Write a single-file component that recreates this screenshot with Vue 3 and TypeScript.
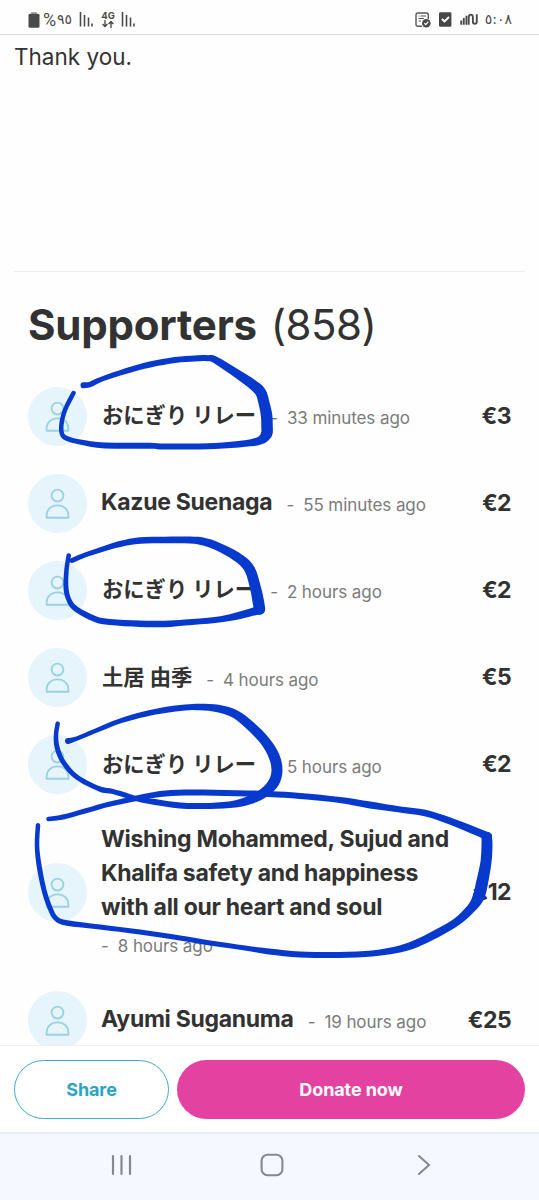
<script setup lang="ts">
interface Supporter {
  name: string
  time: string
  amount: string
  long?: boolean
  cjk?: boolean
}

const supporters: Supporter[] = [
  { name: 'おにぎり リレー', time: '33 minutes ago', amount: '€3', cjk: true },
  { name: 'Kazue Suenaga', time: '55 minutes ago', amount: '€2' },
  { name: 'おにぎり リレー', time: '2 hours ago', amount: '€2', cjk: true },
  { name: '土居 由季', time: '4 hours ago', amount: '€5', cjk: true },
  { name: 'おにぎり リレー', time: '5 hours ago', amount: '€2', cjk: true },
  {
    name: 'Wishing Mohammed, Sujud and Khalifa safety and happiness with all our heart and soul',
    time: '8 hours ago',
    amount: '€12',
    long: true,
  },
  { name: 'Ayumi Suganuma', time: '19 hours ago', amount: '€25' },
]

// Pen strokes: x, y and pen width at each point.
type Point = [number, number, number]

const strokes: Point[][] = [
  [[83.5, 385.3, 6], [90, 384.5, 5.5], [102, 379, 5], [126, 371, 5.5], [150, 364.5, 6], [175, 360, 6], [195, 358.4, 6], [208, 358.2, 6], [215.5, 360, 7], [236, 373, 8.5], [252, 384, 10], [260.5, 392, 11], [264, 403, 11], [266.5, 415, 11.5], [267, 426, 11.5], [266.5, 434, 11.5], [260, 440.5, 8.5], [245, 443.5, 6.5], [215, 446, 6], [185, 446.5, 6], [160, 446.5, 6], [150, 445.7, 6], [105, 445.5, 6], [80, 442, 5], [67, 438.5, 5], [62, 434, 4.5], [61.5, 424, 4.5], [65, 410, 4.5], [73.5, 393, 4.5]],
  [[68.7, 555.5, 4.5], [66.5, 570, 4.5], [66, 588, 5], [69, 600, 5], [76, 609, 5.5], [95, 619, 6], [110, 622, 6], [140, 623.7, 6.5], [165, 624, 6.5], [185, 622.5, 6], [215, 620, 6], [235, 616.5, 7], [252, 612, 8], [260, 610, 9]],
  [[259.5, 609, 11.5], [258, 600, 11.5], [255.5, 588, 11], [250, 570, 10.5], [240, 559, 9.5], [222, 548.5, 8.5], [205, 542, 8], [190, 540, 7], [165, 540, 6.5], [140, 540.5, 6.5], [120, 544, 6], [100, 550, 5], [85, 555, 5], [72, 560.5, 5]],
  [[57.7, 723.5, 4.5], [56, 735, 4.5], [57, 747, 5], [62, 760, 5], [72, 773, 5], [83, 781, 5], [95, 787, 5], [103, 790, 5.5], [112, 791.3, 5], [125, 795, 5], [138, 799, 5], [155, 802, 6], [180, 805.5, 6], [210, 806, 6], [235, 804, 7], [252, 799, 9], [265, 792, 10], [274, 782, 11], [277, 770, 11], [274, 756, 11], [265, 741, 10], [250, 725.5, 9.5], [235, 714, 8.5], [218, 708.5, 7.5], [200, 707, 6.5], [185, 707.5, 6], [165, 710, 6], [145, 714, 5.5], [120, 721, 5], [95, 731, 4.5], [77, 738.5, 4.5], [68, 741, 6]],
  [[48.5, 819, 4.5], [63, 817, 5], [85, 811, 5], [110, 804, 5], [138, 798, 5.5], [160, 794, 6], [185, 792.5, 6], [225, 793, 6], [269, 794, 6], [300, 796, 6], [340, 800, 6], [370, 805, 7], [400, 809.5, 6], [425, 813, 6.5], [450, 821, 7], [475, 831, 7.5], [488, 836.5, 8]],
  [[486.7, 837, 10.5], [487, 845, 11], [486, 862, 11], [482, 883, 12], [478.5, 897, 12], [471, 908.5, 9], [455, 923, 8], [430, 937, 8], [410, 946, 7.5], [390, 951, 6.5], [365, 954, 6], [330, 955, 6], [300, 954.5, 6], [269, 951.5, 6], [245, 948, 5], [210, 943, 5], [180, 938, 5], [140, 932, 5], [100, 927, 5], [67, 923, 5.5], [56, 918.5, 5], [50, 908, 5], [44, 890, 5], [39, 865, 5], [37, 845, 4.5], [38, 825, 4.5]],
]

function spline(a: number, b: number, c: number, d: number, t: number): number {
  return 0.5 * (2 * b + (c - a) * t + (2 * a - 5 * b + 4 * c - d) * t * t + (3 * b - a - 3 * c + d) * t * t * t)
}

// Closed shape of a stroke: its two offset edges with a round cap at each end.
function outline(points: Point[]): string {
  const samples: Point[] = []
  const steps = 4
  for (let i = 0; i < points.length - 1; i++) {
    const p0 = points[Math.max(i - 1, 0)]
    const p1 = points[i]
    const p2 = points[i + 1]
    const p3 = points[Math.min(i + 2, points.length - 1)]
    for (let s = 0; s < steps; s++) {
      const t = s / steps
      samples.push([
        spline(p0[0], p1[0], p2[0], p3[0], t),
        spline(p0[1], p1[1], p2[1], p3[1], t),
        p1[2] + (p2[2] - p1[2]) * t,
      ])
    }
  }
  samples.push(points[points.length - 1])

  const left: string[] = []
  const right: string[] = []
  samples.forEach(([x, y, w], i) => {
    const before = samples[Math.max(i - 1, 0)]
    const after = samples[Math.min(i + 1, samples.length - 1)]
    const dx = after[0] - before[0]
    const dy = after[1] - before[1]
    const len = Math.hypot(dx, dy) || 1
    const ox = (dy / len) * (w / 2)
    const oy = (-dx / len) * (w / 2)
    left.push(`${(x + ox).toFixed(2)} ${(y + oy).toFixed(2)}`)
    right.unshift(`${(x - ox).toFixed(2)} ${(y - oy).toFixed(2)}`)
  })
  const endR = samples[samples.length - 1][2] / 2
  const startR = samples[0][2] / 2
  return `M${left.join('L')}A${endR} ${endR} 0 0 1 ${right.join('L')}A${startR} ${startR} 0 0 1 ${left[0]}Z`
}

const ink: string[] = strokes.map(outline)
</script>

<template>
  <div class="screen">
    <header class="status">
      <div class="status-left">
        <svg class="battery" width="12" height="16" viewBox="0 0 12 16">
          <rect x="3" y="0" width="6" height="3" rx="1" fill="#aaa" />
          <rect x="0.5" y="1.8" width="11" height="14" rx="1.5" fill="#4a4a4a" />
        </svg>
        <span class="percent">%</span><span class="digits">٩٥</span>
        <svg class="bars" width="15" height="15" viewBox="0 0 15 15" stroke="#4a4a4a" stroke-width="1.6">
          <path d="M1.5 0V14.5M5.5 3V14.5M9.5 5.5V14.5M13 11.5V14.5" />
        </svg>
        <div class="net">
          <span>4G</span>
          <svg width="12" height="8" viewBox="0 0 12 8" fill="none" stroke="#444" stroke-width="1.3">
            <path d="M3 0V6M.6 4L3 6.6L5.4 4M9 8V1.5M6.6 4L9 1.4L11.4 4" />
          </svg>
        </div>
        <svg class="bars second" width="15" height="15" viewBox="0 0 15 15" stroke="#4a4a4a" stroke-width="1.6">
          <path d="M1.5 0V14.5M5.5 3V14.5M9.5 5.5V14.5M13 11.5V14.5" />
        </svg>
      </div>
      <div class="status-right">
        <svg width="16" height="16" viewBox="0 0 16 16" fill="none" stroke="#555" stroke-width="1.4">
          <path d="M7 14.2H3Q1 14.2 1 12.2V3Q1 1 3 1H11.3Q13.3 1 13.3 3V7" />
          <path d="M3.5 4H4.5M5.5 4H11M3.5 6.5H9M3.5 9H6" stroke-width="1" />
          <circle cx="11.3" cy="11.2" r="4.3" fill="#4a4a4a" stroke="none" />
          <path d="M9.3 11.2L10.8 12.7L13.3 9.7" stroke="#fff" stroke-width="1.2" />
        </svg>
        <svg class="check" width="13" height="15" viewBox="0 0 13 15">
          <rect x="0" y="0.3" width="12.4" height="14.4" rx="1.2" fill="#484848" />
          <path d="M3 7L5.5 9.5L10 5" fill="none" stroke="#fff" stroke-width="1.9" />
        </svg>
        <svg class="wave" width="18" height="13" viewBox="0 0 19 13" fill="none" stroke="#4a4a4a" stroke-width="2">
          <path d="M1.3 7.5V12M4 5V12M6.8 2.5V12" />
          <path d="M9.2 12V4Q9.2 1.3 11.4 1.3T13.6 4V8.5Q13.6 11 15.7 11T17.7 8.5V1" />
        </svg>
        <span class="clock">٥:٠٨</span>
      </div>
    </header>

    <main class="page">
      <p class="thanks">Thank you.</p>
      <section class="supporters">
        <h2>Supporters <span>(858)</span></h2>
        <ul>
          <li v-for="(s, i) in supporters" :key="i" :class="{ long: s.long, cjk: s.cjk }">
            <svg class="avatar" viewBox="0 0 58 58">
              <circle cx="29" cy="29" r="29" fill="#e6f4fb" />
              <g fill="none" stroke="#9bd0e5" stroke-width="1.8" stroke-linejoin="round">
                <circle cx="29" cy="21.2" r="5.8" />
                <path d="M18.3 43V41C18.3 34.7 23 30.9 29 30.9S39.7 34.7 39.7 41V43Z" />
              </g>
            </svg>
            <div class="who">
              <strong>{{ s.name }}</strong>
              <span class="time"><i>-</i>{{ s.time }}</span>
            </div>
            <b class="amount">{{ s.amount }}</b>
          </li>
        </ul>
      </section>
    </main>

    <footer class="actions">
      <button class="share">Share</button>
      <button class="donate">Donate now</button>
    </footer>

    <nav class="nav">
      <svg width="22" height="22" viewBox="0 0 22 22" stroke="#858990" stroke-width="2.2" stroke-linecap="round">
        <path d="M2 2V20M10.5 2V20M19 2V20" />
      </svg>
      <svg class="home" width="24" height="24" viewBox="0 0 24 24" fill="none" stroke="#858990" stroke-width="2.1">
        <rect x="1.6" y="1.8" width="20.8" height="20.4" rx="6" />
      </svg>
      <svg width="14" height="22" viewBox="0 0 14 22" fill="none" stroke="#858990" stroke-width="2.1" stroke-linecap="round">
        <path d="M2 2L12 11L2 20" />
      </svg>
    </nav>

    <svg class="ink" viewBox="0 0 539 1200">
      <path v-for="(d, i) in ink" :key="i" :d="d" />
    </svg>
  </div>
</template>

<style>
body {
  margin: 0;
  background: #fff;
}
</style>

<style scoped>
.screen {
  position: relative;
  display: flex;
  flex-direction: column;
  width: 539px;
  height: 1200px;
  overflow: hidden;
  background: #fefefe;
  color: #323232;
  font-family: Inter, "Noto Sans CJK JP", sans-serif;
}
.status {
  display: flex;
  flex: none;
  justify-content: space-between;
  box-sizing: border-box;
  height: 35px;
  padding: 5px 27px 0 28px;
  border-bottom: 1px solid #dcdcdc;
  color: #4a4a4a;
}
.status-left,
.status-right {
  display: flex;
  align-items: center;
}
.percent {
  width: 14px;
  margin-left: 3px;
  font: 18px/20px Roboto, sans-serif;
}
.digits,
.clock {
  font: 14px/20px "DejaVu Sans", sans-serif;
}
.digits {
  width: 16px;
  margin-top: -2px;
}
.bars {
  margin-left: 6px;
}
.net {
  display: flex;
  flex-direction: column;
  align-items: center;
  width: 14px;
  margin-left: 7px;
  font: 700 9.5px/9px Inter, sans-serif;
}
.bars.second {
  margin-left: 6px;
}
.check {
  margin-left: 8px;
}
.wave {
  margin-left: 8px;
}
.clock {
  margin: -1px 0 0 7px;
}
.page {
  flex: 1;
  min-height: 0;
  overflow: hidden;
}
.thanks {
  box-sizing: border-box;
  height: 237px;
  margin: 0 14px;
  padding-top: 6px;
  border-bottom: 1px solid #ededed;
  font-size: 22.5px;
  line-height: 32px;
}
.supporters {
  padding: 28px 28px 0;
}
h2 {
  height: 50px;
  margin: 0;
  font-size: 42px;
  line-height: 50px;
  font-weight: 750;
  letter-spacing: -0.2px;
  white-space: nowrap;
}
h2 span {
  margin-left: 4px;
  font-weight: 400;
  letter-spacing: -0.5px;
}
ul {
  margin: 0;
  padding: 22.5px 0 0;
  list-style: none;
}
li {
  display: flex;
  align-items: center;
  height: 87.2px;
}
li.long {
  height: 168px;
}
.avatar {
  flex: none;
  width: 59px;
  height: 59px;
}
.who {
  flex: 1;
  margin-left: 14px;
  margin-top: 1px;
  line-height: 34px;
}
.who strong {
  font-size: 23px;
  font-weight: 650;
  letter-spacing: -0.29px;
}
.cjk .who strong {
  margin-left: 1px;
  font-size: 21.3px;
  letter-spacing: 0;
}
.time {
  margin-left: 14px;
  color: #7b7b7b;
  font-size: 17px;
  letter-spacing: -0.08px;
  white-space: nowrap;
}
.time i {
  margin-right: 9px;
  font-style: normal;
}
li:not(.long) .time {
  vertical-align: -1px;
}
.long .who {
  margin-top: 0;
}
.long strong {
  display: block;
  width: 360px;
}
.long .time {
  display: block;
  margin: 5px 0 0;
}
.amount {
  margin-top: -1px;
  font-size: 23px;
  font-weight: 650;
  letter-spacing: -0.6px;
}
.actions {
  display: flex;
  flex: none;
  gap: 8px;
  box-sizing: border-box;
  height: 87px;
  padding: 14px 14px 0;
  border-top: 1px solid #efefef;
  background: #fff;
}
button {
  box-sizing: border-box;
  height: 59px;
  padding: 0;
  border-radius: 30px;
  font: 650 18px/56px Inter, sans-serif;
  letter-spacing: -0.1px;
}
.share {
  width: 155px;
  border: 1px solid #3fa9c6;
  background: #fff;
  color: #2ba3c9;
}
.donate {
  flex: 1;
  border: 0;
  background: #e442a0;
  color: #fff;
}
.nav {
  display: flex;
  flex: none;
  align-items: center;
  justify-content: space-between;
  box-sizing: border-box;
  height: 68px;
  padding: 0 108px 5px 111px;
  border-top: 2px solid #e9eff4;
  background: #f5f9ff;
}
.home {
  margin-right: 6px;
}
.ink {
  position: absolute;
  top: 0;
  left: 0;
  width: 539px;
  height: 1200px;
  fill: #0739cc;
  pointer-events: none;
}
</style>
